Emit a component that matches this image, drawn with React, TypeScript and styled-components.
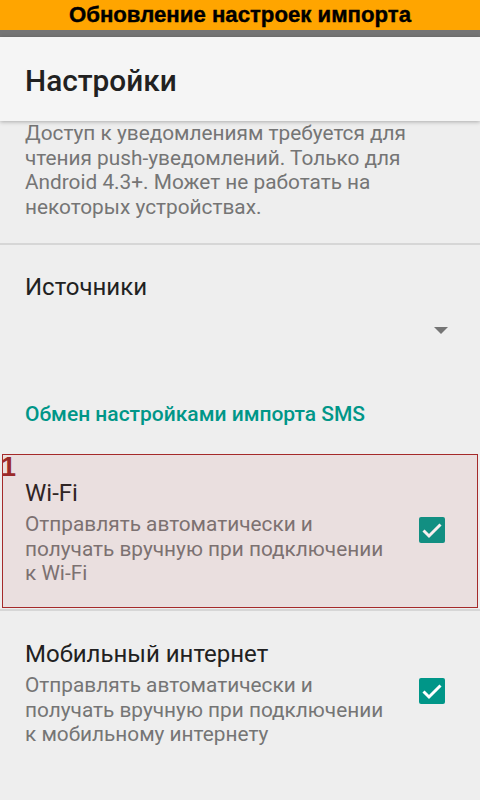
import React from "react";
import styled, { createGlobalStyle } from "styled-components";

const Global = createGlobalStyle`
  html, body { margin: 0; padding: 0; background: #eeeeee; }
  body { font-family: Roboto, "Noto Sans", sans-serif; -webkit-font-smoothing: antialiased; }
  * { box-sizing: border-box; }
`;

const Page = styled.div`
  width: 480px;
  height: 800px;
  overflow: hidden;
  background: #eeeeee;
  display: flex;
  flex-direction: column;
`;

const Banner = styled.div`
  height: 30px;
  flex: none;
  background: #ffa500;
  display: flex;
  align-items: center;
  justify-content: center;
  font-family: "Liberation Sans", Arial, sans-serif;
  font-weight: 700;
  font-size: 22.2px;
  color: #000;
  -webkit-text-stroke: 0.4px #000;
`;

const StatusStrip = styled.div`
  height: 7px;
  flex: none;
  background: #757575;
`;

const Toolbar = styled.header`
  height: 84px;
  flex: none;
  background: #f5f5f5;
  display: flex;
  align-items: center;
  padding: 4px 25px 0;
  position: relative;
  z-index: 1;
  box-shadow: 0 1px 4px rgba(0, 0, 0, 0.28);
`;

const ToolbarTitle = styled.h1`
  margin: 0;
  font-family: Roboto, sans-serif;
  font-weight: 500;
  font-size: 29.8px;
  line-height: 34px;
  color: #212121;
`;

const Content = styled.main`
  flex: 1;
  display: flex;
  flex-direction: column;
`;

const Summary = styled.p`
  margin: 0;
  font-size: 20.8px;
  line-height: 24.5px;
  color: #757575;
`;

const Block = styled.div<{ $pt: number; $pb: number }>`
  padding: ${(p) => p.$pt}px 25px ${(p) => p.$pb}px;
`;

const Divider = styled.div`
  height: 2px;
  background: #d6d6d6;
  flex: none;
`;

const Title = styled.div`
  font-size: 24px;
  line-height: 28px;
  color: #212121;
`;

const SpinnerRow = styled.div`
  display: flex;
  justify-content: flex-end;
  padding-right: 7px;
  margin-top: 26px;
`;

const Triangle = styled.div`
  width: 0;
  height: 0;
  border-left: 7px solid transparent;
  border-right: 7px solid transparent;
  border-top: 7px solid #757575;
`;

const Category = styled.div`
  font-size: 21px;
  font-weight: 500;
  line-height: 24px;
  color: #009688;
`;

const PrefRow = styled.div<{ $h: number }>`
  position: relative;
  height: ${(p) => p.$h}px;
  display: flex;
  align-items: center;
  padding: 0 35px 0 25px;
  flex: none;
`;

const PrefText = styled.div`
  flex: 1;
  display: flex;
  flex-direction: column;
  padding: 6px 27px 0 0;
`;

const SummaryGap = styled(Summary)`
  margin-top: 5px;
`;

const Check = styled.div`
  width: 26px;
  height: 26px;
  border-radius: 2px;
  background: #009688;
  flex: none;
  display: flex;
`;

const Highlight = styled.div`
  position: absolute;
  top: 4px;
  left: 2px;
  right: 2px;
  bottom: 1px;
  border: 1px solid #a52a2a;
  background: rgba(200, 80, 80, 0.09);
  pointer-events: none;
`;

const HighlightLabel = styled.span`
  position: absolute;
  top: -1.5px;
  left: -2px;
  font-family: "Liberation Sans", Arial, sans-serif;
  font-weight: 700;
  font-size: 27px;
  line-height: 1;
  color: #9b2a2a;
`;

const CheckIcon = () => (
  <svg width="26" height="26" viewBox="0 0 26 26">
    <path d="M4.5 13.5 L10 19 L21.5 7.5" fill="none" stroke="#fff" strokeWidth="3" />
  </svg>
);

const Pref: React.FC<{ title: string; summary: string; h: number; highlight?: string }> = ({
  title,
  summary,
  h,
  highlight,
}) => (
  <PrefRow $h={h}>
    <PrefText>
      <Title>{title}</Title>
      <SummaryGap>{summary}</SummaryGap>
    </PrefText>
    <Check>
      <CheckIcon />
    </Check>
    {highlight && (
      <Highlight>
        <HighlightLabel>{highlight}</HighlightLabel>
      </Highlight>
    )}
  </PrefRow>
);

export default function App() {
  return (
    <>
      <Global />
      <Page>
        <Banner>Обновление настроек импорта</Banner>
        <StatusStrip />
        <Toolbar>
          <ToolbarTitle>Настройки</ToolbarTitle>
        </Toolbar>
        <Content>
          <Block $pt={0} $pb={24}>
            <Summary>
              Доступ к уведомлениям требуется для чтения push-уведомлений. Только для Android 4.3+. Может не
              работать на некоторых устройствах.
            </Summary>
          </Block>
          <Divider />
          <Block $pt={28} $pb={68}>
            <Title>Источники</Title>
            <SpinnerRow>
              <Triangle />
            </SpinnerRow>
          </Block>
          <Block $pt={0} $pb={24}>
            <Category>Обмен настройками импорта SMS</Category>
          </Block>
          <Pref
            title="Wi-Fi"
            summary="Отправлять автоматически и получать вручную при подключении к Wi-Fi"
            h={159}
            highlight="1"
          />
          <Divider />
          <Pref
            title="Мобильный интернет"
            summary="Отправлять автоматически и получать вручную при подключении к мобильному интернету"
            h={159}
          />
        </Content>
      </Page>
    </>
  );
}
